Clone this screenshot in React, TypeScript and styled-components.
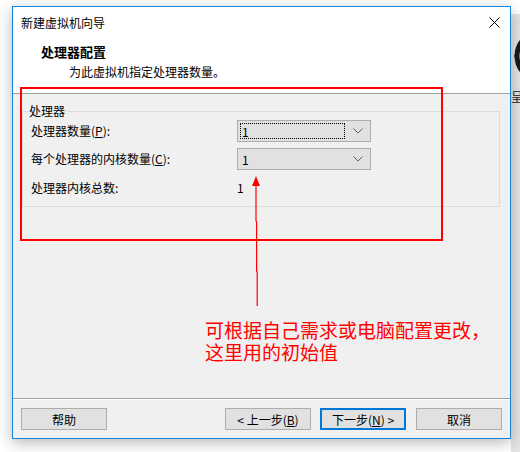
import React from 'react';
import styled, { createGlobalStyle } from 'styled-components';

const GlobalStyle = createGlobalStyle`
  html, body {
    margin: 0;
    padding: 0;
    background: #ffffff;
  }
  body {
    font-family: "Noto Sans CJK SC", "Microsoft YaHei", sans-serif;
    font-size: 12px;
    color: #000;
  }
`;

const Desktop = styled.div`
  width: 520px;
  height: 452px;
  display: flex;
  align-items: flex-start;
  padding: 6px 0 0 12px;
  box-sizing: border-box;
  overflow: hidden;
`;

const Window = styled.div`
  width: 499px;
  height: 433px;
  box-sizing: border-box;
  border: 1px solid #1883d7;
  background: #f0f0f0;
  display: flex;
  flex-direction: column;
  box-shadow: 0 4px 14px rgba(0, 0, 0, 0.28);
  position: relative;
  z-index: 1;
`;

const BehindStrip = styled.div`
  margin-top: 8px;
  width: 9px;
  height: 444px;
  background: #e4e4e4;
  display: flex;
  flex-direction: column;
  align-items: flex-start;
  overflow: hidden;
`;

const BehindText = styled.span`
  margin-top: 6px;
  font-size: 12px;
  line-height: 14px;
  white-space: nowrap;
  color: #222;
`;

const TitleBar = styled.div`
  height: 31px;
  background: #ffffff;
  display: flex;
  align-items: center;
  justify-content: space-between;
  padding: 0 10px 0 8px;
  font-size: 12px;
`;

const Header = styled.div`
  height: 55px;
  background: #ffffff;
  display: flex;
  flex-direction: column;
  border-bottom: 1px solid #a0a0a0;
  padding-left: 28px;
`;

const HeaderTitle = styled.div`
  font-weight: bold;
  font-size: 13px;
  line-height: 16px;
  margin-top: 6px;
`;

const HeaderSub = styled.div`
  font-size: 12px;
  line-height: 16px;
  margin-top: 4px;
  padding-left: 28px;
`;

const Body = styled.div`
  flex: 1;
  position: relative;
  padding: 9px 10px 0 9px;
  border-bottom: 1px solid #a0a0a0;
`;

const Group = styled.fieldset`
  margin: 0;
  border: 1px solid #dcdcdc;
  padding: 1px 0 10px 8px;
  display: grid;
  grid-template-columns: 206px 134px;
  row-gap: 6px;
  align-items: center;
`;

const Legend = styled.legend`
  padding: 0 1px;
  margin-left: -3px;
  font-size: 12px;
  line-height: 16px;
`;

const Label = styled.span`
  font-size: 12px;
  line-height: 16px;
`;

const Value = styled.span<{ $pad?: boolean }>`
  font-size: 12px;
  line-height: 16px;
  margin-top: ${(p) => (p.$pad ? '4px' : '0')};
`;

const Combo = styled.div`
  height: 22px;
  box-sizing: border-box;
  border: 1px solid #adadad;
  background: #e1e1e1;
  display: flex;
  align-items: center;
  padding: 2px 7px 2px 2px;
`;

const ComboText = styled.div<{ $focus?: boolean }>`
  flex: 1;
  height: 100%;
  box-sizing: border-box;
  display: flex;
  align-items: center;
  padding-left: 1px;
  margin-right: 8px;
  border: 1px dotted ${(p) => (p.$focus ? '#000' : 'transparent')};
`;

const Footer = styled.div`
  height: 39px;
  border-top: 1px solid #ffffff;
  display: flex;
  align-items: flex-start;
  padding: 8px 8px 0 8px;
  box-sizing: border-box;
`;

const Button = styled.button<{ $default?: boolean; $gap?: number }>`
  width: 86px;
  height: 22px;
  margin-left: ${(p) => p.$gap ?? 0}px;
  box-sizing: border-box;
  background: #e1e1e1;
  border: ${(p) => (p.$default ? '2px solid #0078d7' : '1px solid #adadad')};
  font-family: "Noto Sans CJK SC", sans-serif;
  font-size: 12px;
  color: #000;
  padding: 0;
  display: flex;
  align-items: center;
  justify-content: center;
`;

const Spacer = styled.div`
  flex: 1;
`;

const Underline = styled.span`
  text-decoration: underline;
`;

const RedBox = styled.div`
  position: absolute;
  left: 7px;
  top: -7px;
  width: 423px;
  height: 154px;
  box-sizing: border-box;
  border: 2px solid #ff0000;
  pointer-events: none;
`;

const ArrowSvg = styled.svg`
  position: absolute;
  left: 224px;
  top: 82px;
`;

const Note = styled.div`
  position: absolute;
  left: 192px;
  top: 225px;
  color: #ff0000;
  font-family: "Noto Sans CJK SC", sans-serif;
  font-size: 19px;
  line-height: 22px;
  white-space: nowrap;
`;

const Chevron = () => (
  <svg width="10" height="6" viewBox="0 0 10 6">
    <polyline points="0.5,0.5 5,5 9.5,0.5" fill="none" stroke="#606060" strokeWidth="1" />
  </svg>
);

export default function App() {
  return (
    <>
      <GlobalStyle />
      <Desktop>
        <Window>
          <TitleBar>
            <span>新建虚拟机向导</span>
            <svg width="11" height="11" viewBox="0 0 11 11">
              <path d="M0.5 0.5 L10.5 10.5 M10.5 0.5 L0.5 10.5" stroke="#000" strokeWidth="1" />
            </svg>
          </TitleBar>
          <Header>
            <HeaderTitle>处理器配置</HeaderTitle>
            <HeaderSub>为此虚拟机指定处理器数量。</HeaderSub>
          </Header>
          <Body>
            <Group>
              <Legend>处理器</Legend>
              <Label>
                处理器数量(<Underline>P</Underline>):
              </Label>
              <Combo>
                <ComboText $focus>1</ComboText>
                <Chevron />
              </Combo>
              <Label>
                每个处理器的内核数量(<Underline>C</Underline>):
              </Label>
              <Combo>
                <ComboText>1</ComboText>
                <Chevron />
              </Combo>
              <Value $pad>处理器内核总数:</Value>
              <Value $pad>1</Value>
            </Group>
            <RedBox />
            <ArrowSvg width="40" height="132" viewBox="0 0 40 132">
              <polygon points="19,0 15,10 23,10" fill="#ff0000" />
              <path d="M19 8 L19 45 L19.6 46 L19.6 95 L20.2 96 L20.2 130" stroke="#ff0000" strokeWidth="1.2" fill="none" />
            </ArrowSvg>
            <Note>
              可根据自己需求或电脑配置更改，
              <br />
              这里用的初始值
            </Note>
          </Body>
          <Footer>
            <Button>帮助</Button>
            <Spacer />
            <Button>
              &lt; 上一步(<Underline>B</Underline>)
            </Button>
            <Button $default $gap={9}>
              下一步(<Underline>N</Underline>) &gt;
            </Button>
            <Button $gap={10}>取消</Button>
          </Footer>
        </Window>
        <BehindStrip>
          <svg width="9" height="70" viewBox="0 0 9 70">
            <circle cx="30" cy="42" r="24" fill="none" stroke="#1a1a1a" strokeWidth="5" />
            <path d="M4 42 L9 36 M4 42 L9 48" stroke="#1a1a1a" strokeWidth="2" />
          </svg>
          <BehindText>呈凹</BehindText>
        </BehindStrip>
      </Desktop>
    </>
  );
}
